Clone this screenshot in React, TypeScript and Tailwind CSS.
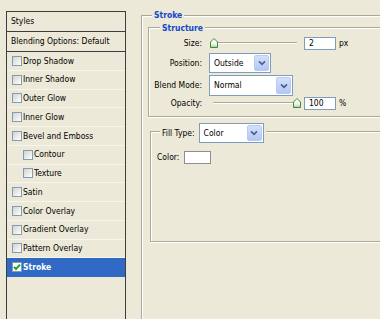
import React from "react";

const items = [
  { label: "Drop Shadow" },
  { label: "Inner Shadow" },
  { label: "Outer Glow" },
  { label: "Inner Glow" },
  { label: "Bevel and Emboss" },
  { label: "Contour", indent: true },
  { label: "Texture", indent: true },
  { label: "Satin" },
  { label: "Color Overlay" },
  { label: "Gradient Overlay" },
  { label: "Pattern Overlay" },
  { label: "Stroke", selected: true },
];

function CheckBox({ checked }: { checked?: boolean }) {
  return (
    <span
      className={`w-[10px] h-[10px] border border-[#7f9db9] flex items-center justify-center shrink-0 ${
        checked ? "bg-white" : "bg-linear-to-br from-[#d4d3ca] to-white"
      }`}
    >
      {checked && (
        <svg width="8" height="8" viewBox="0 0 8 8">
          <path d="M1 3.8 L3 6 L7 1.6" stroke="#21a121" strokeWidth="1.9" fill="none" />
        </svg>
      )}
    </span>
  );
}

function Chevron() {
  return (
    <svg width="8" height="6" viewBox="0 0 8 6">
      <path d="M1 1.3 L4 4.3 L7 1.3" stroke="#4d6185" strokeWidth="1.7" fill="none" />
    </svg>
  );
}

function Select({ value, className }: { value: string; className: string }) {
  return (
    <div className={`flex border border-[#7f9db9] bg-white ${className}`}>
      <span className="flex-1 flex items-center pl-[4px] text-black">{value}</span>
      <span className="w-[15px] m-[1px] rounded-[2px] border border-[#b9cbf3] bg-linear-to-b from-[#d3e0fd] to-[#b2c7f6] flex items-center justify-center">
        <Chevron />
      </span>
    </div>
  );
}

function Thumb() {
  return (
    <svg width="8" height="10" viewBox="0 0 8 10">
      <defs>
        <linearGradient id="tg" x1="0" y1="0" x2="0" y2="1">
          <stop offset="0" stopColor="#ffffff" />
          <stop offset="0.6" stopColor="#f2f8ef" />
          <stop offset="1" stopColor="#9fd08f" />
        </linearGradient>
      </defs>
      <path d="M0.5 4 L4 0.5 L7.5 4 L7.5 9.5 L0.5 9.5 Z" fill="url(#tg)" stroke="#3f8a3f" strokeWidth="1" />
    </svg>
  );
}

function Slider({ at }: { at: "start" | "end" }) {
  return (
    <div className="relative w-[91px] h-[12px]">
      <div className="absolute left-[4px] right-[3px] top-[5px] border-t border-[#aca899] shadow-[0_1px_0_#fff]" />
      <div className={`absolute top-[1px] ${at === "start" ? "left-[1px]" : "left-[84px]"}`}>
        <Thumb />
      </div>
    </div>
  );
}

export default function App() {
  return (
    <div className="w-[380px] h-[319px] overflow-hidden bg-[#ece9d8] flex font-['DejaVu_Sans_Condensed','DejaVu_Sans',sans-serif] text-[8.5px] leading-none text-black">
      {/* Styles list */}
      <div className="mt-[11px] ml-[6px] w-[120px] h-[330px] shrink-0 border border-[#3d3d3d] flex flex-col">
        <div className="h-[20px] shrink-0 flex items-center pl-[4px] border-b border-[#3d3d3d]">Styles</div>
        <div className="h-[20px] shrink-0 flex items-center pl-[4px] border-b border-[#3d3d3d]">
          Blending Options: Default
        </div>
        {items.map((it) => (
          <div
            key={it.label}
            className={`h-[18.75px] shrink-0 flex items-center gap-[1px] border-b ${
              it.selected ? "bg-[#316ac5] border-[#316ac5] text-white font-bold" : "border-[#f7f5ec]"
            } ${it.indent ? "pl-[16px]" : "pl-[5px]"}`}
          >
            <CheckBox checked={it.selected} />
            <span>{it.label}</span>
          </div>
        ))}
      </div>

      {/* Stroke group */}
      <div className="relative mt-[15px] ml-[15px] flex-1 h-[330px] border-l border-t border-[#aca899] shadow-[inset_1px_1px_0_#fff] pl-[6px] pt-[11px]">
        <span className="absolute left-[10px] top-[-6px] h-[10px] flex items-center px-[2px] bg-[#ece9d8] font-bold text-[#1547c8]">
          Stroke
        </span>

        {/* Structure */}
        <div className="relative h-[90px] border-l border-t border-b border-[#aca899] shadow-[inset_1px_1px_0_#fff,0_1px_0_#fff] pt-[8px]">
          <span className="absolute left-[11px] top-[-5px] h-[10px] flex items-center px-[2px] bg-[#ece9d8] font-bold text-[#1547c8]">
            Structure
          </span>

          <div className="h-[14px] flex items-center">
            <span className="w-[53px] text-right">Size:</span>
            <div className="ml-[7px]">
              <Slider at="start" />
            </div>
            <div className="ml-[4px] w-[32px] h-[13px] border border-[#7f9db9] bg-white flex items-center pl-[4px]">2</div>
            <span className="ml-[3px]">px</span>
          </div>

          <div className="mt-[3px] h-[20px] flex items-center">
            <span className="w-[53px] text-right">Position:</span>
            <Select value="Outside" className="ml-[7px] w-[62px] h-[20px]" />
          </div>

          <div className="mt-[2px] h-[21px] flex items-center">
            <span className="w-[53px] text-right">Blend Mode:</span>
            <Select value="Normal" className="ml-[7px] w-[84px] h-[21px]" />
          </div>

          <div className="h-[14px] flex items-center">
            <span className="w-[53px] text-right">Opacity:</span>
            <div className="ml-[7px]">
              <Slider at="end" />
            </div>
            <div className="ml-[4px] w-[32px] h-[13px] border border-[#7f9db9] bg-white flex items-center pl-[4px]">100</div>
            <span className="ml-[3px]">%</span>
          </div>
        </div>

        {/* Fill type */}
        <div className="relative mt-[14px] ml-[2px] h-[111px] border-l border-t border-b border-[#aca899] shadow-[inset_1px_1px_0_#fff,0_1px_0_#fff] pt-[19px] pl-[6px]">
          <div className="absolute left-[9px] top-[-9px] flex items-center gap-[4px] px-[2px] bg-[#ece9d8]">
            <span>Fill Type:</span>
            <Select value="Color" className="w-[65px] h-[20px]" />
          </div>
          <div className="flex items-center">
            <span className="w-[27px]">Color:</span>
            <div className="w-[27px] h-[13px] border border-[#8e8e8e] bg-white" />
          </div>
        </div>
      </div>
    </div>
  );
}
